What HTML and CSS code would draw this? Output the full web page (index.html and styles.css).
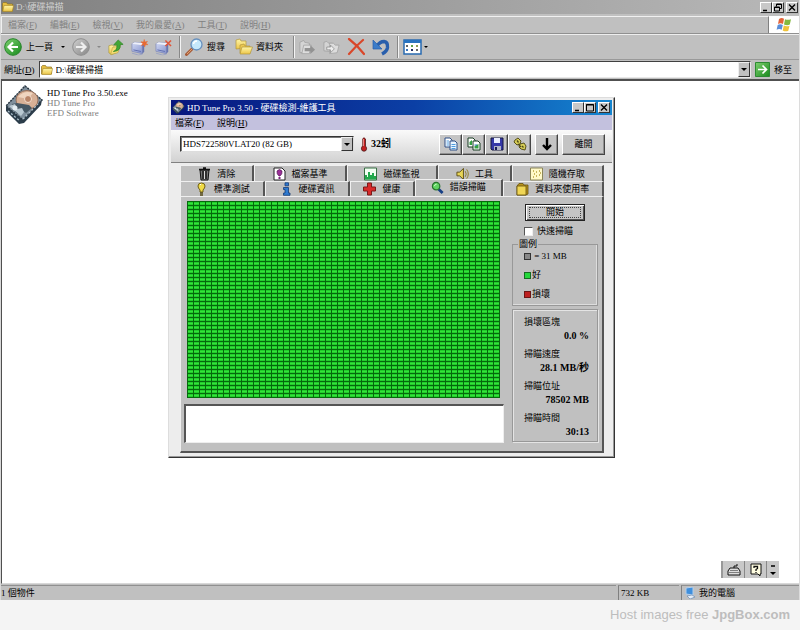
FILE: index.html
```html
<!DOCTYPE html>
<html lang="zh-Hant">
<head>
<meta charset="utf-8">
<title>D:\硬碟掃描</title>
<link rel="stylesheet" href="styles.css">
</head>
<body>
<svg class="defs" aria-hidden="true">
  <defs>
    <linearGradient id="green" x1="0" y1="0" x2="1" y2="1"><stop offset="0" stop-color="#7ed070"/><stop offset="1" stop-color="#178a1c"/></linearGradient>
    <linearGradient id="gray" x1="0" y1="0" x2="1" y2="1"><stop offset="0" stop-color="#d0d0d0"/><stop offset="1" stop-color="#858585"/></linearGradient>
    <linearGradient id="gold" x1="0" y1="0" x2="0" y2="1"><stop offset="0" stop-color="#fff6a8"/><stop offset="1" stop-color="#ecc548"/></linearGradient>
    <linearGradient id="screen" x1="0" y1="0" x2="1" y2="1"><stop offset="0" stop-color="#d3daf3"/><stop offset="1" stop-color="#8290cc"/></linearGradient>
    <symbol id="folder" viewBox="0 0 12 10"><path d="M.5 9V1.5L1.500.5H4.500L5.500 2H10.500V9Z" fill="#e5bd42" stroke="#8d7220" stroke-width=".7"/><path d="M2 3.500H11.600L10.300 9.400H.8Z" fill="url(#gold)" stroke="#a58529" stroke-width=".6"/></symbol>
    <symbol id="drive" viewBox="0 0 40 40"><path d="M21 1 38 15 37 20 20 38 15 39 2 26 2 21Z" fill="#2c3d4b"/><path d="M21 1 38 15 19 35 2 21Z" fill="#7f8f9c" stroke="#2b3944" stroke-width="1.500" stroke-dasharray="2 1"/><ellipse cx="23" cy="15" rx="11" ry="9.500" fill="#d7b096" stroke="#96715c"/><path d="M14 12Q20 5 29 8L24 14Z" fill="#f0d5bf"/><circle cx="24" cy="14" r="3.500" fill="#b98568" stroke="#f3dfd0"/><path d="M8 19 13 18 25 20 28 23 22 28 16 24 14 29 9 25Z" fill="#465763"/><path d="M5 21 11 19 13 24 18 23 20 27 17 31Z" fill="#b9c8d1"/><circle cx="11" cy="23" r="2.500" fill="#e4edf2"/><path d="m4 26 12 10M19 34l15-15" stroke="#aec1cc" stroke-width="1.300" stroke-dasharray="2 2"/></symbol>
    <symbol id="pages" viewBox="0 0 14 14"><path d="M1 1H6L8 3V10H1Z" fill="#fff" stroke="#2d4f86"/><path d="M6 4H11L13 6V13H6Z" fill="#eaf5ff" stroke="#2d4f86"/><path d="M2.500 4H5M2.500 6H5M2.500 8H5M7.500 7.500H11.500M7.500 9.500H11.500M7.500 11.500H11.500" stroke="#4c9ade"/></symbol>
    <symbol id="pages-green" viewBox="0 0 14 14"><path d="M1 1H6L8 3V10H1Z" fill="#fff" stroke="#183c23"/><path d="M6 4H11L13 6V13H6Z" fill="#fff" stroke="#183c23"/><path d="M2.500 5 5 3V8H2.500ZM7.500 9 11.500 7V11.500H7.500Z" fill="#35a044"/><path d="M7.500 8H10" stroke="#3272c8"/></symbol>
    <symbol id="monitor" viewBox="0 0 18 17"><path d="M1 4.500 4 3 14 4 12 6 12 15 1 12.500Z" fill="url(#screen)" stroke="#7a84b4" stroke-width=".7"/><path d="M1 4.500 4 3 14 4 12 6Z" fill="#eef0fa"/><path d="M12 6 14 4V13L12 15Z" fill="#6875b0"/><path d="M2.500 11 10.500 12.700" stroke="#5e6cae" stroke-width="1"/><path d="M1 14.500 8 16.500 12 15.500" fill="none" stroke="#9ba3c4" stroke-width="1"/></symbol>
  </defs>
</svg>

<main class="explorer">
  <header class="titlebar">
    <svg class="icon-folder"><use href="#folder"/></svg>
    <h1>D:\硬碟掃描</h1>
    <div class="window-buttons">
      <button aria-label="最小化"><svg viewBox="0 0 10 9"><path d="M2 7.500H6" stroke="#000" stroke-width="1.500"/></svg></button>
      <button aria-label="還原"><svg viewBox="0 0 10 9"><path d="M3.500 3.500V1H8.500V5.500H6.500M1.500 4H6.500V8H1.500Z" fill="none" stroke="#000"/><path d="M3 1.500H9M1 4.500H7" stroke="#000"/></svg></button>
      <button class="close" aria-label="關閉"><svg viewBox="0 0 10 9"><path d="M2 1.500 8 7.500M8 1.500 2 7.500" stroke="#000" stroke-width="1.400"/></svg></button>
    </div>
  </header>

  <nav class="menubar">
    <div class="menus">
      <button>檔案(<u>F</u>)</button><button>編輯(<u>E</u>)</button><button>檢視(<u>V</u>)</button><button>我的最愛(<u>A</u>)</button><button>工具(<u>T</u>)</button><button>說明(<u>H</u>)</button>
    </div>
    <div class="brand">
      <svg viewBox="0 0 16 15"><path d="M3 2Q5.500.2 8 1.700L7 7Q4.500 5.500 2 7Z" fill="#e4633a"/><path d="M9 2.200Q11.500 3.500 15 2.200L13.800 7.600Q11 8.800 8 7.400Z" fill="#83b93f"/><path d="M1.700 8Q4.200 6.500 6.800 8L5.700 12.800Q3.300 11.400.6 12.800Z" fill="#5b8ed8"/><path d="M7.800 8.500Q10.700 9.800 13.500 8.700L12.300 13.800Q9.500 15 6.700 13.400Z" fill="#f0c33b"/></svg>
    </div>
  </nav>

  <div class="toolbar">
    <button class="tool back"><svg class="round" viewBox="0 0 18 18"><circle cx="9" cy="9" r="8.300" fill="url(#green)" stroke="#258329"/><path d="M14 9H5M9 4.500 4.500 9 9 13.500" fill="none" stroke="#fff" stroke-width="2.200"/></svg><span>上一頁</span><i class="caret"></i></button>
    <button class="tool forward" aria-label="下一頁"><svg class="round" viewBox="0 0 18 18"><circle cx="9" cy="9" r="8.300" fill="url(#gray)" stroke="#8e8e8e"/><path d="M4 9H13M9 4.500 13.500 9 9 13.500" fill="none" stroke="#eee" stroke-width="2.200"/></svg><i class="caret dim"></i></button>
    <button class="tool" aria-label="上移"><svg class="mid" viewBox="0 0 18 18"><path d="M1 15V7L5 6 6 7.500 11 6V14L4 17Z" fill="url(#gold)" stroke="#a59130" stroke-width=".7"/><path d="M3 17 5 9 14 7 11 15Z" fill="#f3dc75" stroke="#b59c37" stroke-width=".6"/><path d="M6 13.500Q10.500 12 10 6H6.500L11.500.5 17 5.500 13.800 5.800Q14.500 13 6 13.500Z" fill="#43a735" stroke="#278021" stroke-width=".7"/></svg></button>
    <button class="tool" aria-label="對應網路磁碟機"><svg class="mid wide" viewBox="0 0 18 17"><use href="#monitor"/><path d="m14 0 .7 2.700L17.500 2 15.800 4 18 5.500 15.300 5.500 14.500 8 13.500 5.700 11 6.500 12.500 4.300 10.500 2.500 13.200 2.700Z" fill="#e96a32" stroke="#e96a32" stroke-width=".5"/></svg></button>
    <button class="tool" aria-label="中斷網路磁碟機"><svg class="mid wide" viewBox="0 0 18 17"><use href="#monitor"/><path d="M11 1 17 7M17 1 11 7" stroke="#e05438" stroke-width="1.600"/></svg></button>
    <span class="divider"></span>
    <button class="tool search"><svg class="round" viewBox="0 0 18 18"><path d="M7 11 1.500 16.500" stroke="#a85c38" stroke-width="3" stroke-linecap="round"/><path d="M7 11 2 16" stroke="#dda071" stroke-width="1"/><circle cx="11.500" cy="6.500" r="5.500" fill="#c5e8fb" stroke="#668fbd" stroke-width="1.300"/><path d="M8.500 6Q9 3 12 3" stroke="#fff" stroke-width="1.400" fill="none"/></svg><span>搜尋</span></button>
    <button class="tool folders"><svg class="round" viewBox="0 0 18 18"><path d="M1 11V2L5 1 6 3H11V10Z" fill="url(#gold)" stroke="#b3963b" stroke-width=".7"/><path d="M5 15V7L9 6 10 8H15V14Z" fill="#ecc850" stroke="#b3963b" stroke-width=".7"/><path d="M7 9H17.500L15 16H5Z" fill="url(#gold)" stroke="#b3963b" stroke-width=".7"/></svg><span>資料夾</span></button>
    <span class="divider wide-gap"></span>
    <button class="tool" aria-label="移至資料夾"><svg class="mid wide" viewBox="0 0 18 17"><path d="M1 14V3L5 1 6 3 11 4V14Z" fill="#d4d4d4" stroke="#999" stroke-width=".7"/><path d="M3 15 5 6H13L11 15Z" fill="#ddd" stroke="#9a9a9a" stroke-width=".7"/><path d="M6 9H12V6L17 11 12 15.500V12.500H6Z" fill="#929292"/></svg></button>
    <button class="tool" aria-label="複製到資料夾"><svg class="mid wide" viewBox="0 0 18 17"><path d="M1 12V3L4 2 6 4 10 4V13Z" fill="#d4d4d4" stroke="#999" stroke-width=".7"/><path d="M7 15V4H11L13 6H17L15 14Z" fill="#ddd" stroke="#999" stroke-width=".7"/><path d="M4 8H8V6L12 10 8 14V11H4Z" fill="#eee" stroke="#888" stroke-width=".8"/></svg></button>
    <button class="tool" aria-label="刪除"><svg class="round" viewBox="0 0 18 18"><path d="M2 1Q10 7 17 16M16 2Q9 8 2 16" fill="none" stroke="#d9472a" stroke-width="2.200" stroke-linecap="round"/></svg></button>
    <button class="tool" aria-label="復原"><svg class="round" viewBox="0 0 18 18"><path d="M5 8Q8 3.500 12 3.500 16 4 15.500 9.500 15 13.500 10 16" fill="none" stroke="#285eac" stroke-width="3.400"/><path d="M1 2V11H10Z" fill="#3b7cc9" stroke="#285eac" stroke-width=".7"/></svg></button>
    <span class="divider"></span>
    <button class="tool views" aria-label="檢視"><svg viewBox="0 0 19 16"><path d="M1 1H18V15H1Z" fill="#fff" stroke="#286ab0" stroke-width="1.500"/><path d="M1 2.500H18" stroke="#2873c0" stroke-width="3"/><path d="M4 6V8M14 10V12" stroke="#666" stroke-width="2"/><path d="M9 6V8" stroke="#5fa24a" stroke-width="2"/><path d="M14 6V8" stroke="#8f9d54" stroke-width="2"/><path d="M4 10V12" stroke="#3974bd" stroke-width="2"/><path d="M9 10V12" stroke="#202d67" stroke-width="2"/></svg><i class="caret"></i></button>
  </div>

  <form class="address">
    <label for="path">網址(<u>D</u>)</label>
    <div class="path-box">
      <svg class="icon-folder"><use href="#folder"/></svg>
      <input id="path" type="text" value="D:\硬碟掃描">
      <button type="button" class="drop" aria-label="展開"><i class="caret"></i></button>
    </div>
    <button type="button" class="go"><svg viewBox="0 0 15 15"><path d="M.5.5H14.500V14.500H.5Z" fill="url(#green)" stroke="#2c8a33"/><path d="M3 7.500H11M7.500 3.500 11.500 7.500 7.500 11.500" fill="none" stroke="#fff" stroke-width="1.700"/></svg>移至</button>
  </form>

  <section class="desktop">
    <a class="file" href="#">
      <svg><use href="#drive"/></svg>
      <span><b>HD Tune Pro 3.50.exe</b><br>HD Tune Pro<br>EFD Software</span>
    </a>

    <section class="dialog">
      <header class="dialog-title">
        <svg class="icon-drive"><use href="#drive"/></svg>
        <h2>HD Tune Pro 3.50 - 硬碟檢測-維護工具</h2>
        <div class="window-buttons">
          <button aria-label="最小化"><svg viewBox="0 0 10 9"><path d="M2 7.500H6" stroke="#000" stroke-width="1.500"/></svg></button>
          <button aria-label="最大化"><svg viewBox="0 0 10 9"><path d="M1.500 1.500H8.500V8H1.500ZM1 2H9" fill="none" stroke="#000"/></svg></button>
          <button class="close" aria-label="關閉"><svg viewBox="0 0 10 9"><path d="M2 1.500 8 7.500M8 1.500 2 7.500" stroke="#000" stroke-width="1.400"/></svg></button>
        </div>
      </header>
      <nav class="dialog-menu"><button>檔案(<u>F</u>)</button><button>說明(<u>H</u>)</button></nav>

      <div class="dialog-tools">
        <div class="drive-box">
          <select aria-label="磁碟機"><option>HDS722580VLAT20 (82 GB)</option></select>
          <span class="drop"><i class="caret"></i></span>
        </div>
        <div class="temp">
          <svg viewBox="0 0 8 15"><path d="M2.500 2Q4-.5 5.500 2V9Q7.500 11 6 13.500 4 15 2 13.500.5 11 2.500 9Z" fill="#c32020" stroke="#471b1b" stroke-width=".8"/><path d="M3.200 2V9" stroke="#f2b4ad"/></svg>
          <strong>32蚓</strong>
        </div>
        <div class="actions">
          <button aria-label="複製文字"><svg><use href="#pages"/></svg></button>
          <button aria-label="複製圖片"><svg><use href="#pages-green"/></svg></button>
          <button aria-label="儲存"><svg viewBox="0 0 14 14"><path d="M1 1H13V13H2L1 12Z" fill="#3437a8" stroke="#15173f"/><path d="M4 1H10V6H4Z" fill="#e8edff"/><path d="M4 9H11V13H4Z" fill="#aeb2c5"/><path d="M5 10H7V13H5Z" fill="#171b55"/></svg></button>
          <button aria-label="選項"><svg viewBox="0 0 14 14"><path d="M2 3 5 1 8 4 7 7 4 8 1 5ZM7 7 11 6 13 9 12 13 8 12 6 10Z" fill="#d8ce57" stroke="#565019"/><path d="M4 3.500 5.500 5.500M9 9 10.500 10.500M5 7 8 10" stroke="#4f4a18" stroke-width="1.300"/></svg></button>
          <button class="down" aria-label="向下"><svg viewBox="0 0 14 14"><path d="M7 1V12M3 8 7 12 11 8" fill="none" stroke="#000" stroke-width="2.400"/></svg></button>
          <button class="exit">離開</button>
        </div>
      </div>

      <div class="tabs-area">
        <div class="tab-row first">
          <button><svg viewBox="0 0 13 14"><path d="M2 3H11L10 13H3Z" fill="#777" stroke="#111"/><path d="M1 2.500H12M5 1H8M5 4V12M8 4V12" stroke="#111" stroke-width="1.400"/><path d="M6.500 4V12" stroke="#ddd"/></svg>清除</button>
          <button><svg viewBox="0 0 13 14"><path d="M1 1H9L12 4V13H1Z" fill="#fff" stroke="#222"/><path d="M4 4Q6.500 1 9 4 9.500 7 7 9H6Q3.500 7 4 4Z" fill="#9c2f99" stroke="#511653" stroke-width=".7"/><path d="M5.500 11H7.500" stroke="#7b217d" stroke-width="2"/></svg>檔案基準</button>
          <button><svg viewBox="0 0 13 14"><path d="M.5 1H12.500V13H.5Z" fill="#f2fff3" stroke="#376f43"/><path d="M1 12.500V8H3V10H4V5H6V8H8V6H10V9H12V12.500Z" fill="#20a84a"/></svg>磁碟監視</button>
          <button><svg viewBox="0 0 14 14"><path d="M1 5H4L8 1V13L4 9H1Z" fill="#e8d556" stroke="#5a4c11"/><path d="M10 4Q12 7 10 10M11.500 2Q15 7 11.500 12" fill="none" stroke="#8f7a23"/></svg>工具</button>
          <button><svg viewBox="0 0 13 14"><path d="M.5 1H12.500V13H.5Z" fill="#fff9c8" stroke="#8c8658"/><path d="M3 10H4M4 7H5M6 9H7M6 5H7M9 4H10M9 8H10M10 6H11M3 4H4" stroke="#b6a03c" stroke-width="1.300"/></svg>隨機存取</button>
        </div>
        <div class="tab-row second">
          <button><svg viewBox="0 0 13 14"><path d="M3 4Q3 1 6.500 1T10 4Q10 6 8 8V10H5V8Q3 6 3 4Z" fill="#f1dc48" stroke="#716116"/><path d="M5 11H8M5 13H8" stroke="#574b18" stroke-width="1.400"/><path d="M5 3 6 2" stroke="#fff"/></svg>標準測試</button>
          <button><svg viewBox="0 0 13 14"><path d="M5 .8H8.500V3.800H5ZM3.500 5.500H8.500V11H10V13.300H3.500V11H5V7.500H3.500Z" fill="#2f7bd1" stroke="#153b77" stroke-width=".8"/></svg>硬碟資訊</button>
          <button><svg viewBox="0 0 13 14"><path d="M4.500 1H8.500V5H12.500V9H8.500V13H4.500V9H.5V5H4.500Z" fill="#d82b2b" stroke="#7c1919"/></svg>健康</button>
          <button class="selected"><svg viewBox="0 0 14 14"><path d="M8 8 12.500 12.500" stroke="#163f85" stroke-width="3"/><circle cx="5.500" cy="5" r="4" fill="#61d463" stroke="#28722d" stroke-width="1.300"/><path d="M3.500 5Q4 3 6 3" fill="none" stroke="#d3ffc9"/></svg>錯誤掃瞄</button>
          <button><svg viewBox="0 0 13 14"><path d="M1 4 3 1.500H7L8 3H12V12L10 13H1Z" fill="#b8921c" stroke="#65500c" stroke-width=".8"/><path d="M1 4H10V13H1Z" fill="#f0d655" stroke="#65500c" stroke-width=".8"/></svg>資料夾使用率</button>
        </div>
        <div class="panel">
          <div class="scan">
            <div class="blocks" role="img" aria-label="掃瞄區塊"></div>
            <textarea aria-label="掃瞄記錄" readonly></textarea>
          </div>
          <aside>
            <button class="start"><span>開始</span></button>
            <label class="quick"><input type="checkbox">快速掃瞄</label>
            <fieldset>
              <legend>圖例</legend>
              <p><i class="swatch"></i>&nbsp;= 31 MB</p>
              <p><i class="swatch good"></i>好</p>
              <p><i class="swatch bad"></i>損壞</p>
            </fieldset>
            <dl>
              <dt>損壞區塊</dt><dd>0.0 %</dd>
              <dt>掃瞄速度</dt><dd>28.1 MB/秒</dd>
              <dt>掃瞄位址</dt><dd>78502 MB</dd>
              <dt>掃瞄時間</dt><dd>30:13</dd>
            </dl>
          </aside>
        </div>
      </div>
    </section>

    <div class="langbar">
      <button aria-label="鍵盤"><svg viewBox="0 0 14 14"><path d="M7 5V3H10V1" fill="none" stroke="#111"/><path d="M3 5H11L13 8V12H1V8Z" fill="#ddd" stroke="#111"/><path d="M3 7.500H11M2 9.500H12" stroke="#555" stroke-width=".7"/></svg></button>
      <button aria-label="說明"><svg viewBox="0 0 14 14"><path d="M2 1H12V11H11V13L9 11H2Z" fill="#fffde1" stroke="#111"/><path d="M5 5V3.500H8.500V5.500L7 6.500V8M7 9V10" fill="none" stroke="#111" stroke-width="1.300"/></svg></button>
      <button class="more" aria-label="選項"><svg viewBox="0 0 8 14"><path d="M2 3H6" stroke="#000" stroke-width="1.500"/><path d="M1 9H7L4 12Z"/></svg></button>
    </div>
  </section>

  <footer class="status">
    <span class="count">1 個物件</span><span class="size">732 KB</span>
    <span class="place"><svg viewBox="0 0 12 12"><path d="M2 1 9 0V8L2 7Z" fill="#3f8fdc" stroke="#b4cfec"/><path d="M3 9 8 8 11 10 6 12Z" fill="#e7eef7" stroke="#5b81ae" stroke-width=".6"/></svg>我的電腦</span>
  </footer>
</main>
<p class="host">Host images free <b>JpgBox.com</b></p>
</body>
</html>
```
FILE: styles.css
```css
* { box-sizing: border-box; }

body {
  margin: 0;
  min-height: 100vh;
  display: flex;
  flex-direction: column;
  background: #f4f4f4;
  color: #000;
  font: 9px/12px "Liberation Serif", "Noto Sans CJK TC", serif;
}

button, input, select, textarea {
  font: inherit;
  color: inherit;
  margin: 0;
  padding: 0;
  border: 0;
  border-radius: 0;
  background: none;
}

h1, h2, p, dl, dd { margin: 0; font-size: inherit; font-weight: normal; }
svg { display: block; flex: none; }
.defs { position: absolute; width: 0; height: 0; }

.explorer {
  flex: 1;
  display: flex;
  flex-direction: column;
  background: #c0c0c0;
  border-left: 1px solid #d8d8d8;
  border-right: 1px solid #dcdcdc;
}

/* Title bar */
.titlebar {
  display: flex;
  align-items: center;
  gap: 2px;
  height: 14px;
  padding: 0 1px;
  background: linear-gradient(90deg, #808080, #b8b8b8);
  color: #d0d0d0;
}
.icon-folder { width: 12px; height: 10px; }
.window-buttons { display: flex; margin-left: auto; }
.window-buttons button {
  width: 12px;
  height: 11px;
  background: #c8c8c8;
  border: 1px solid;
  border-color: #fff #333 #333 #fff;
}
.window-buttons svg { width: 10px; height: 9px; }
.window-buttons .close { margin-left: 2px; }

/* Menu bar */
.menubar {
  display: flex;
  height: 20px;
  padding-top: 2px;
  border-bottom: 1px solid #909090;
  color: #808080;
}
.menus {
  flex: 1;
  display: flex;
  align-items: center;
  gap: 13px;
  padding-left: 6px;
  border-top: 1px solid #f0f0f0;
  border-left: 1px solid #f0f0f0;
  border-right: 1px solid #808080;
}
.brand {
  width: 30px;
  display: grid;
  place-items: center;
  background: #fff;
}
.brand svg { width: 16px; height: 15px; }

/* Standard buttons */
.toolbar {
  display: flex;
  align-items: center;
  gap: 7px;
  height: 26px;
  padding-left: 3px;
  border-top: 1px solid #eee;
  border-bottom: 1px solid #999;
}
.tool { display: flex; align-items: center; gap: 4px; }
.round { width: 18px; height: 18px; }
.mid { width: 16px; height: 17px; }
.mid.wide { width: 17px; }
.caret {
  border: 2px solid transparent;
  border-top-color: #000;
  border-bottom: 0;
}
.caret.dim { border-top-color: #888; }
.back .caret { margin-left: 4px; }
.forward { gap: 7px; }
.divider {
  width: 2px;
  height: 22px;
  margin-right: -3px;
  border-left: 1px solid #888;
  border-right: 1px solid #f4f4f4;
}
.divider.wide-gap { margin-left: 3px; }
.folders { gap: 3px; margin-left: 3px; }
.views svg { width: 19px; height: 16px; }
.views { gap: 2px; }

/* Address row */
.address {
  display: flex;
  align-items: center;
  gap: 4px;
  height: 19px;
  padding-left: 3px;
}
.path-box {
  flex: 1;
  display: flex;
  align-items: center;
  gap: 3px;
  height: 17px;
  padding-left: 1px;
  background: #fff;
  border: 1px solid;
  border-color: #404040 #e8e8e8 #e8e8e8 #404040;
}
.path-box input { flex: 1; min-width: 0; height: 13px; outline: 0; }
.drop {
  flex: none;
  display: grid;
  place-items: center;
  width: 12px;
  height: 100%;
  background: #c0c0c0;
  border: 1px solid;
  border-color: #eee #333 #333 #eee;
}
.drop .caret { border-width: 3px 3px 0; }
.go { display: flex; align-items: center; gap: 4px; padding-right: 7px; }
.go svg { width: 15px; height: 15px; }

/* Folder contents */
.desktop {
  flex: 1;
  position: relative;
  min-height: 400px;
  background: #fff;
  border-top: 2px solid #505050;
  border-left: 1px solid #505050;
  border-bottom: 1px solid #d8d8d8;
}
.file {
  display: flex;
  gap: 3px;
  width: 160px;
  padding: 4px 2px;
  color: #808080;
  line-height: 10px;
  text-decoration: none;
}
.file svg { width: 40px; height: 40px; }
.file span { padding-top: 3px; }
.file b { font-weight: normal; color: #000; }

/* HD Tune window */
.dialog {
  position: absolute;
  left: 166px;
  top: 16px;
  width: 447px;
  padding: 2px;
  background: #ededed;
  border: 1px solid;
  border-color: #ddd #333 #333 #ddd;
  box-shadow: inset -1px -1px #999;
}
.dialog-title {
  display: flex;
  align-items: center;
  gap: 2px;
  height: 15px;
  padding: 0 2px 0 1px;
  background: linear-gradient(90deg, #08167e, #0b3fa5 55%, #1585d0);
  color: #fff;
}
.icon-drive { width: 13px; height: 13px; }
.dialog-menu {
  display: flex;
  gap: 13px;
  height: 15px;
  padding-left: 4px;
  background: #c3c1de;
}
.dialog-tools {
  display: flex;
  align-items: center;
  height: 33px;
  padding: 0 7px 4px 9px;
  background: linear-gradient(#fafafa, #d2d2d2);
  border-bottom: 1px solid #808080;
}
.drive-box {
  display: flex;
  width: 174px;
  height: 16px;
  background: #fff;
  border: 1px solid;
  border-color: #333 #ddd #ddd #333;
  box-shadow: inset 1px 1px #777;
}
.drive-box select {
  flex: 1;
  min-width: 0;
  padding-left: 2px;
  appearance: none;
  outline: 0;
}
.temp { display: flex; align-items: center; gap: 3px; margin-left: 6px; font-size: 10px; }
.temp svg { width: 8px; height: 15px; }
.actions { display: flex; margin-left: auto; }
.actions button {
  display: grid;
  place-items: center;
  width: 23px;
  height: 21px;
  background: #c4c4c4;
  border: 1px solid;
  border-color: #fff #444 #444 #fff;
  box-shadow: inset -1px -1px #909090;
}
.actions svg { width: 14px; height: 14px; }
.actions .down { margin-left: 4px; }
.actions .exit { width: 43px; margin-left: 4px; }

/* Tabs */
.tabs-area { padding: 2px 8px 2px 9px; }
.tab-row { display: grid; height: 16px; background: #c0c0c0; }
.tab-row.first { grid-template-columns: 74fr 92fr 91fr 73fr 92fr; }
.tab-row.second { grid-template-columns: 85fr 84fr 65fr 87fr 101fr; height: 15px; }
.tab-row button {
  display: flex;
  align-items: center;
  justify-content: center;
  gap: 6px;
  border-top: 1px solid #f0f0f0;
  border-left: 1px solid #f0f0f0;
  border-right: 2px solid #555;
}
.tab-row svg { width: 13px; height: 14px; }
.tab-row .selected {
  z-index: 1;
  margin-top: -2px;
  background: #c0c0c0;
  align-items: flex-start;
  padding-top: 1px;
}
.panel {
  display: flex;
  gap: 8px;
  padding: 4px 4px 8px 3px;
  background: #c0c0c0;
  border: 1px solid #f0f0f0;
  border-right: 2px solid #555;
  border-bottom: 2px solid #555;
}
.scan { flex: 1; display: flex; flex-direction: column; gap: 6px; }
.blocks {
  height: 197px;
  margin: 0 4px 0 3px;
  background:
    repeating-linear-gradient(90deg, #05690c 0 1px, transparent 1px 6px),
    repeating-linear-gradient(#05690c 0 1px, #22cc2c 1px 2px, #33e439 2px 3px, #22cc2c 3px 4px);
  border-right: 1px solid #05690c;
}
.scan textarea {
  display: block;
  width: 100%;
  height: 39px;
  resize: none;
  outline: 0;
  background: #fff;
  border: 1px solid;
  border-width: 2px 1px 1px 2px;
  border-color: #555 #eee #eee #555;
}

/* Scan controls */
aside { width: 86px; display: flex; flex-direction: column; }
.start {
  align-self: center;
  width: 60px;
  height: 17px;
  margin-top: 3px;
  padding: 1px;
  background: #c4c4c4;
  border: 1px solid #222;
  box-shadow: inset 1px 1px #fff, inset -1px -1px #555;
}
.start span { display: block; margin: 0 2px; border: 1px dotted #444; line-height: 9px; }
.quick { display: flex; align-items: center; gap: 4px; height: 12px; margin: 4px 0 0 12px; }
.quick input {
  appearance: none;
  width: 9px;
  height: 9px;
  background: #fff;
  border: 1px solid;
  border-color: #555 #eee #eee #555;
}
fieldset {
  height: 68px;
  margin: 1px 0 3px;
  padding: 0 0 0 11px;
  border: 1px solid #989898;
  box-shadow: inset -1px -1px #ddd;
}
legend { margin-left: -6px; padding: 0 1px; line-height: 12px; }
fieldset p { display: flex; align-items: center; gap: 1px; height: 12px; margin-bottom: 7px; }
fieldset p:last-child { margin: 0; }
.swatch { width: 7px; height: 7px; background: #888; border: 1px solid #333; }
.swatch.good { background: #24d83a; border-color: #176b22; }
.swatch.bad { background: #bd2020; border-color: #6b1616; }
dl {
  height: 133px;
  padding: 5px 8px 0 11px;
  border: 1px solid #989898;
  box-shadow: inset 1px 1px #e4e4e4, 1px 1px #e4e4e4;
}
dt { height: 14px; line-height: 14px; }
dd { height: 18px; line-height: 14px; font-size: 10px; font-weight: bold; text-align: right; }

/* Language bar */
.langbar {
  position: absolute;
  right: 20px;
  bottom: 5px;
  display: flex;
  height: 17px;
  background: #c8c8c8;
  border-left: 2px solid #999;
}
.langbar button { display: grid; place-items: center; width: 22px; border-right: 1px solid #888; }
.langbar svg { width: 14px; height: 14px; }
.langbar .more { width: 12px; border: 0; }
.langbar .more svg { width: 8px; }

/* Status bar */
.status { display: flex; height: 16px; gap: 2px; padding-top: 1px; line-height: 14px; }
.status span { border-left: 1px solid #808080; border-top: 1px solid #909090; }
.status .count { flex: 1; border-left: 0; }
.status .size { width: 61px; padding-left: 2px; }
.status .place { display: flex; align-items: center; gap: 3px; width: 118px; padding-left: 2px; }
.status svg { width: 12px; height: 12px; }

.host {
  padding: 0 10px;
  color: #bdbdbd;
  font: 13px/30px "Liberation Sans", sans-serif;
  text-align: right;
}
```
